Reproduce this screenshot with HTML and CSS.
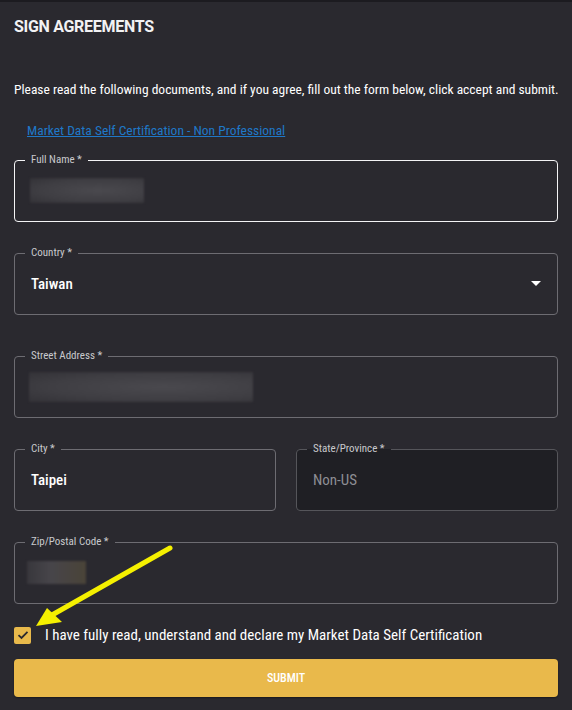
FILE: index.html
```html
<!DOCTYPE html>
<html>
<head>
<meta charset="utf-8">
<link rel="stylesheet" href="styles.css">
</head>
<body>
<div class="page">
  <h1 class="title">SIGN AGREEMENTS</h1>
  <p class="intro">Please read the following documents, and if you agree, fill out the form below, click accept and submit.</p>
  <a class="doc-link" href="#">Market Data Self Certification - Non Professional</a>
  <form class="form">
    <fieldset class="field field-focus">
      <legend>Full Name *</legend>
      <div class="value"><span class="blur blur-name"></span></div>
    </fieldset>
    <fieldset class="field">
      <legend>Country *</legend>
      <div class="value value-select"><span>Taiwan</span><span class="caret"></span></div>
    </fieldset>
    <fieldset class="field field-spaced">
      <legend>Street Address *</legend>
      <div class="value"><span class="blur blur-street"></span></div>
    </fieldset>
    <div class="row">
      <fieldset class="field">
        <legend>City *</legend>
        <div class="value">Taipei</div>
      </fieldset>
      <fieldset class="field field-disabled">
        <legend>State/Province *</legend>
        <div class="value value-muted">Non-US</div>
      </fieldset>
    </div>
    <fieldset class="field">
      <legend>Zip/Postal Code *</legend>
      <div class="value"><span class="blur blur-zip"></span></div>
    </fieldset>
    <label class="check">
      <span class="box"><svg width="12" height="10" viewBox="0 0 12 10"><path d="M1.5 5.2 L4.5 8 L10.5 1.8" fill="none" stroke="#2a292f" stroke-width="1.8"/></svg></span>
      <span class="check-text">I have fully read, understand and declare my Market Data Self Certification</span>
    </label>
    <button type="button" class="submit">SUBMIT</button>
  </form>
  <svg class="arrow" width="572" height="710" viewBox="0 0 572 710">
    <line x1="170" y1="548" x2="52" y2="615" stroke="#f5f000" stroke-width="5" stroke-linecap="round"/>
    <polygon points="36,626 47,608 62,622" fill="#f5f000"/>
  </svg>
</div>
</body>
</html>
```
FILE: styles.css
```css
* { box-sizing: border-box; }
html, body { margin: 0; padding: 0; }
body {
  background: #2a292f;
  font-family: "Roboto Condensed", "Liberation Sans Narrow", "DejaVu Sans Condensed", Roboto, sans-serif;
  color: #ffffff;
  width: 572px;
  height: 710px;
  overflow: hidden;
}
.page {
  position: relative;
  border-top: 2px solid #1c1b20;
  padding: 0 14px 0 14px;
  height: 710px;
}
.title {
  margin: 0;
  padding-top: 15px;
  font-family: Roboto, sans-serif;
  font-weight: 700;
  font-size: 16px;
  line-height: 20px;
  letter-spacing: -0.3px;
  color: #f2f2f4;
}
.intro {
  margin: 44px 0 0 0;
  font-size: 13.5px;
  line-height: 16px;
  white-space: nowrap;
  color: #ffffff;
}
.doc-link {
  display: inline-block;
  margin: 25px 0 0 13px;
  font-size: 13.5px;
  line-height: 16px;
  color: #1f78c8;
}
.form {
  display: flex;
  flex-direction: column;
  gap: 25px;
  margin-top: 15px;
}
.field {
  margin: 0;
  padding: 0 10px;
  border: 1px solid #6d6c72;
  border-radius: 4px;
  min-width: 0;
}
.field-spaced { margin-top: 10px; }
.field legend {
  padding: 0 6px;
  font-size: 11px;
  line-height: 12px;
  color: #c9c9cd;
}
.field-focus { border-color: #f4f4f6; }
.field-disabled { background: #1f1f24; border-color: #55555a; }
.value {
  height: 61px;
  display: flex;
  align-items: center;
  padding: 0 6px;
  margin-top: -6px;
  font-size: 15px;
  font-weight: 500;
  color: #ffffff;
}
.value-select { justify-content: space-between; padding-right: 6px; }
.value-muted { font-weight: 400; color: #8e8e94; }
.caret {
  width: 0; height: 0;
  border-left: 5px solid transparent;
  border-right: 5px solid transparent;
  border-top: 5px solid #ffffff;
  margin-right: 0;
}
.blur {
  display: block;
  height: 25px;
  background: radial-gradient(ellipse at 60% 50%, #4a494e 0%, #3f3e43 60%, #333237 100%);
  filter: blur(1px);
}
.blur-name { width: 114px; margin-left: -1px; }
.blur-street { width: 224px; height: 30px; margin-left: -2px; }
.blur-zip { width: 59px; height: 23px; margin-left: -4px; background: linear-gradient(90deg, #38373c, #47454a 40%, #4a4438); }
.row {
  display: grid;
  grid-template-columns: 1fr 1fr;
  gap: 20px;
}
.check {
  display: flex;
  align-items: center;
  gap: 14px;
  margin-top: -3px;
}
.box {
  width: 17px; height: 17px;
  border-radius: 2px;
  background: #e8b94b;
  display: flex;
  align-items: center;
  justify-content: center;
}
.check-text {
  font-size: 15px;
  line-height: 18px;
  color: #ffffff;
}
.submit {
  margin-top: -10px;
  height: 38px;
  border: 0;
  border-radius: 4px;
  background: #e9b94b;
  color: #ffffff;
  font-family: inherit;
  font-size: 12px;
  font-weight: 500;
  box-shadow: 0 1px 2px rgba(0,0,0,0.4);
}
.arrow {
  position: absolute;
  left: 0;
  top: -2px;
  pointer-events: none;
}
```
